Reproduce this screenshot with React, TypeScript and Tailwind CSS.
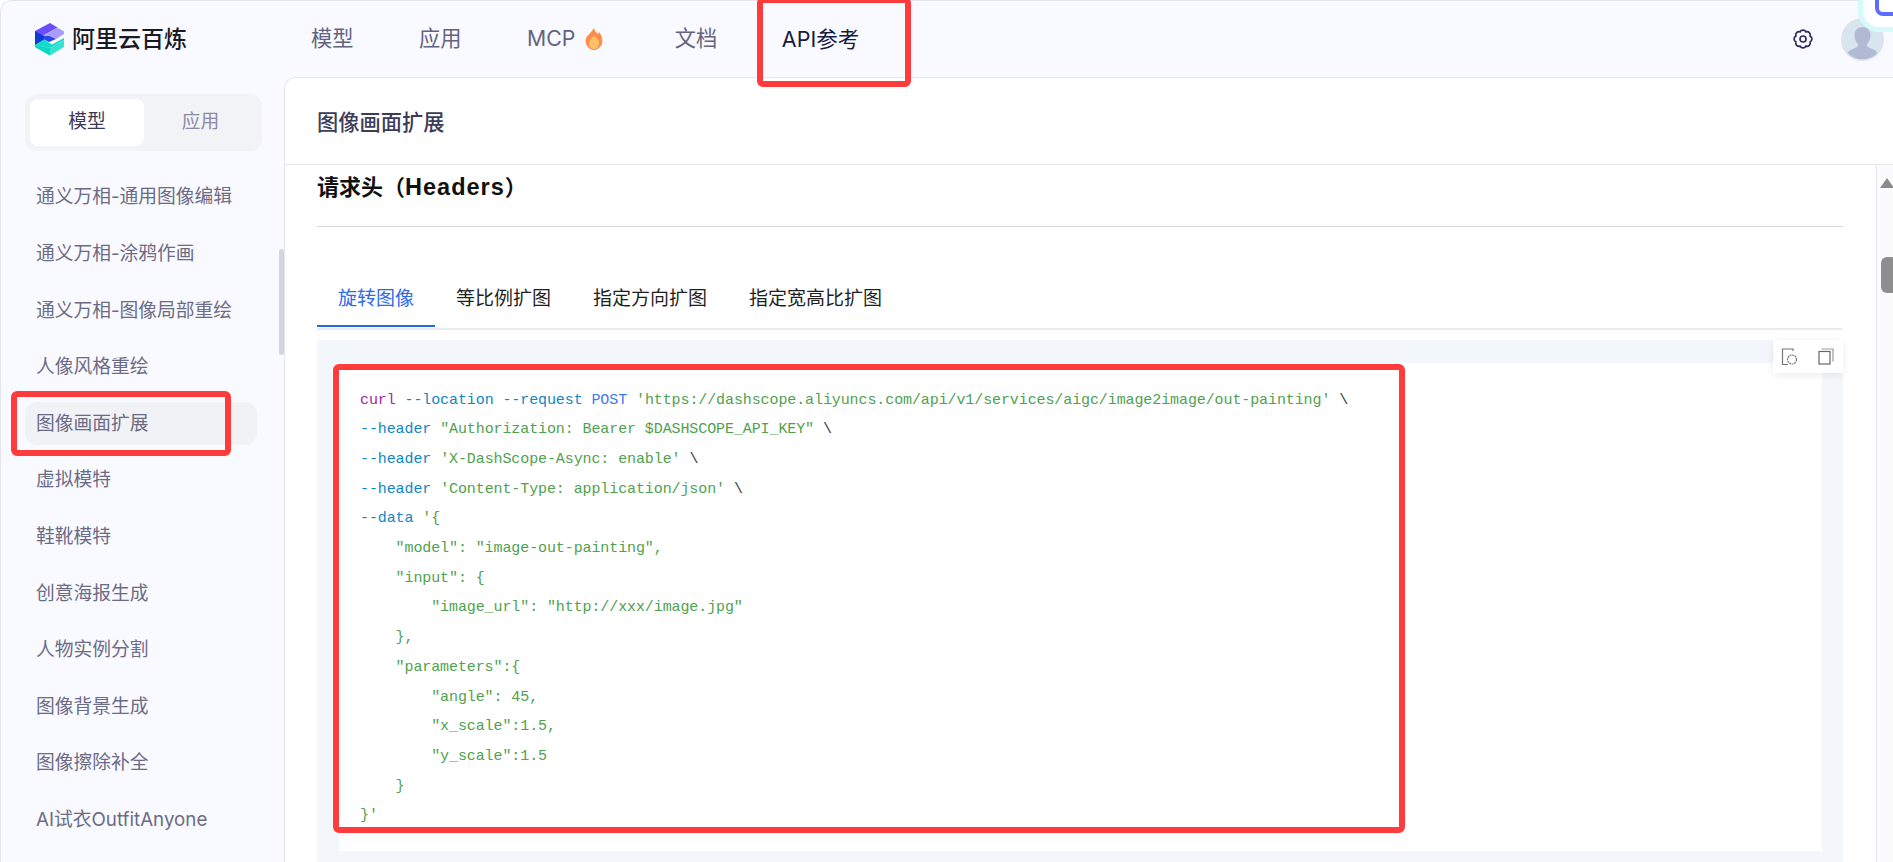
import React from "react";

const items = ["通义万相-通用图像编辑","通义万相-涂鸦作画","通义万相-图像局部重绘","人像风格重绘","图像画面扩展","虚拟模特","鞋靴模特","创意海报生成","人物实例分割","图像背景生成","图像擦除补全","AI试衣OutfitAnyone"];

function Logo() {
  return (
    <svg width="30" height="33" viewBox="5 5 30 33" className="shrink-0">
      <polygon points="20,5 5,13 12.5,18 27.5,9.5" fill="#6B4DFB" />
      <polygon points="27.5,9.5 34,13.5 34,16 26,21 19,17 12.5,18 20,14" fill="#A99CFF" />
      <polygon points="5,13 12.5,18 19,17.5 26,21 19,24 14,21.5 5,27" fill="#2A47E8" />
      <polygon points="5,13 14,18 14,21.5 5,27" fill="#0F3AD6" />
      <polygon points="5,27 14,21.5 22,26.5 34,20 34,22 20,30" fill="#12DCCB" />
      <polygon points="5,27 20,30 34,22 34,29 20,37.5 5,29" fill="#35E3D0" />
      <polygon points="5,27 20,30 20,37.5 5,29" fill="#0DD6C6" />
    </svg>
  );
}

function Flame() {
  return (
    <svg width="18" height="24" viewBox="0 0 18 24" className="shrink-0">
      <path d="M9 1c.6 3 2.2 4 4 6 .5-.6.8-1.2 1-2 2 2.5 3.4 5.4 3.4 8.6C17.400 19 13.600 23 9 23S.6 19 .6 13.600C.6 9 5.600 6.500 9 1z" fill="#FF8B4D" />
      <path d="M9 9c3 1.600 5 4 5 7.200C14 19.600 11.800 22 9 22s-5-2.400-5-5.800C4 13 6.500 11.500 9 9z" fill="#FFC069" />
    </svg>
  );
}

function Gear() {
  return (
    <svg width="22" height="22" viewBox="0 0 24 24" fill="none" stroke="#2B2B5A" strokeWidth="1.800">
      <path d="M19.76 8.79A3.6 3.6 0 0 1 19.76 15.21A3.6 3.6 0 0 1 15.21 19.76A3.6 3.6 0 0 1 8.79 19.76A3.6 3.6 0 0 1 4.24 15.21A3.6 3.6 0 0 1 4.24 8.79A3.6 3.6 0 0 1 8.79 4.24A3.6 3.6 0 0 1 15.21 4.24A3.6 3.6 0 0 1 19.76 8.79Z" />
      <circle cx="12" cy="12" r="3.300" />
    </svg>
  );
}

function Avatar() {
  return (
    <svg width="43" height="43" viewBox="0 0 43 43" className="rounded-full bg-[#D8E4EE] shrink-0">
      <path d="M21.500 9c5 0 8 3.600 8 8.500 0 3.800-1.800 7-3.800 9 .2 2 1.500 3 4.300 4 3 1.100 5 2.300 6.500 4.500a21 21 0 0 1-30 0c1.500-2.200 3.500-3.400 6.500-4.500 2.800-1 4.100-2 4.300-4-2-2-3.800-5.200-3.800-9C13.500 12.600 16.500 9 21.500 9z" fill="#B1B9D3" />
    </svg>
  );
}

function DocGear() {
  return (
    <svg width="18" height="18" viewBox="0 0 18 18" fill="none" stroke="#777" strokeWidth="1.200">
      <path d="M8 1H1.500v15.500H7M8 1h4v2" />
      <circle cx="11" cy="11.500" r="4.500" strokeDasharray="2 .6" />
    </svg>
  );
}

function Copy() {
  return (
    <svg width="16" height="17" viewBox="0 0 16 17" fill="none" stroke="#666" strokeWidth="1.200">
      <rect x="1" y="3.500" width="11" height="12.500" />
      <path d="M3.500 1H15v12.500" stroke="#999" />
    </svg>
  );
}

const P = "text-[#A626A4]";
const B = "text-[#0E86C4]";
const K = "text-[#4078F2]";
const G = "text-[#50A14F]";
const D = "text-[#383A42]";

const jsonLines = [
  `    "model": "image-out-painting",`,
  `    "input": {`,
  `        "image_url": "http://xxx/image.jpg"`,
  `    },`,
  `    "parameters":{`,
  `        "angle": 45,`,
  `        "x_scale":1.5,`,
  `        "y_scale":1.5`,
  `    }`,
  `}'`,
];

function Code() {
  return (
    <pre className="font-['Liberation_Mono',monospace] text-[15px] leading-[29.7px] tracking-[-0.1px] m-0">
      <div><span className={P}>curl</span> <span className={B}>--location</span> <span className={B}>--request</span> <span className={K}>POST</span> <span className={G}>'https://dashscope.aliyuncs.com/api/v1/services/aigc/image2image/out-painting'</span> <span className={D}>\</span></div>
      <div><span className={B}>--header</span> <span className={G}>"Authorization: Bearer $DASHSCOPE_API_KEY"</span> <span className={D}>\</span></div>
      <div><span className={B}>--header</span> <span className={G}>'X-DashScope-Async: enable'</span> <span className={D}>\</span></div>
      <div><span className={B}>--header</span> <span className={G}>'Content-Type: application/json'</span> <span className={D}>\</span></div>
      <div><span className={B}>--data</span> <span className={G}>{"'{"}</span></div>
      {jsonLines.map((l) => (
        <div key={l} className={G}>{l}</div>
      ))}
    </pre>
  );
}

const tabs = ["旋转图像", "等比例扩图", "指定方向扩图", "指定宽高比扩图"];

export default function App() {
  return (
    <div className="relative h-[862px] w-[1893px] overflow-hidden bg-white font-['Inter','Noto_Sans_CJK_SC',sans-serif]">
      <div className="flex h-full flex-col rounded-tl-xl border-t border-l border-[#E6E6EA] bg-[#F9FAFF]">
        <header className="flex h-[76px] shrink-0 items-center pl-[34px] pr-[9px]">
          <div className="flex w-[276px] shrink-0 items-center gap-[7px]">
            <Logo />
            <span className="text-[23px] font-medium text-[#1A1A24]">阿里云百炼</span>
          </div>
          <nav className="flex items-center gap-[65.5px] text-[21.25px] text-[#63637F]">
            <span>模型</span>
            <span>应用</span>
            <span className="mr-[6px] flex items-center gap-[10px]">MCP <Flame /></span>
            <span>文档</span>
            <span className="-ml-[1px] text-[21.5px] text-[#1A1A40]">API参考</span>
          </nav>
          <div className="ml-auto flex items-center gap-[27px]">
            <Gear />
            <Avatar />
          </div>
        </header>
        <div className="flex min-h-0 flex-1">
          <aside className="relative w-[283px] shrink-0 overflow-hidden pl-[24px]">
            <div className="mt-[17px] flex h-[57px] w-[237px] rounded-xl bg-[#F2F3F7] p-[5px] text-[18.75px]">
              <span className="flex w-[114px] items-center justify-center rounded-lg bg-white text-[#3A3A55]">模型</span>
              <span className="flex flex-1 items-center justify-center text-[#8A8AA3]">应用</span>
            </div>
            <ul className="mt-[25px] flex flex-col gap-[13.6px]">
              {items.map((t) => (
                <li key={t} className={`flex h-[43px] w-[232px] shrink-0 items-center rounded-xl px-[11px] text-[18.75px] text-[#6B6B85] ${t === "图像画面扩展" ? "bg-[#F1F2F6]" : ""}`}>{t}</li>
              ))}
            </ul>
            <div className="absolute left-[278px] top-[172px] h-[106px] w-[5px] rounded-full bg-[#D3D4DE]" />
          </aside>
          <main className="flex min-w-0 flex-1 flex-col rounded-tl-xl border-t border-l border-[#E6E6EC] bg-white">
            <div className="flex h-[87px] shrink-0 items-center border-b border-[#E6E6EC] pl-[32px] pt-[3px] text-[21.25px] font-medium text-[#3C3C5A]">图像画面扩展</div>
            <div className="flex min-h-0 flex-1">
              <div className="min-w-0 flex-1 overflow-hidden pl-[32px] pr-[33px]">
                <h2 className="h-[62px] border-b border-[#D9D9DE] pt-[7px] text-[22px] font-bold leading-[30px] text-[#111] font-['Liberation_Sans','Noto_Sans_CJK_SC',sans-serif]">请求头（<span className="text-[23.5px] tracking-[1px]">Headers</span>）</h2>
                <div className="mt-[41px] flex h-[62px] border-b-2 border-[#EBEBEF] text-[19px] text-[#1F1F1F]">
                  {tabs.map((t, i) => (
                    <div key={t} className="relative flex items-center px-[21px] pt-[2px]">
                      <span className={i === 0 ? "text-[#2B6BEA]" : ""}>{t}</span>
                      {i === 0 && <div className="absolute inset-x-0 bottom-[1px] h-[2px] bg-[#1E6BEB]" />}
                    </div>
                  ))}
                </div>
                <div className="relative mt-[10px] h-[522px] bg-[#F3F6FA] pl-[22px] pr-[21px] pt-[23px]">
                  <div className="h-[488px] bg-white pl-[21px] pt-[22.500px]">
                    <Code />
                  </div>
                  <div className="absolute right-0 top-0 flex h-[33px] w-[70px] items-center justify-between bg-white pl-[8px] pr-[9px] shadow-[0_2px_8px_rgba(0,0,0,0.08)]">
                    <DocGear />
                    <Copy />
                  </div>
                </div>
              </div>
              <div className="relative w-[17px] shrink-0 border-l border-[#E6E6EC] bg-[#FBFBFB]">
                <div className="absolute left-[3px] top-[13px] h-0 w-0 border-x-[7px] border-b-[10px] border-x-transparent border-b-[#8B8B8B]" />
                <div className="absolute left-[4px] top-[92px] h-[36px] w-[16px] rounded-md bg-[#8E8E8E]" />
              </div>
            </div>
          </main>
        </div>
      </div>

      <div className="absolute left-[757px] top-[-3px] h-[90px] w-[154px] rounded-md border-[6px] border-[#FF3B3B]" />
      <div className="absolute left-[11px] top-[391px] h-[65px] w-[220px] rounded-md border-[6px] border-[#FF3B3B]" />
      <div className="absolute left-[333px] top-[364px] h-[469px] w-[1072px] rounded-md border-[6px] border-[#FF3B3B]" />
      <div className="absolute left-[1863px] top-[-30px] h-[57px] w-[60px] rounded-2xl bg-white shadow-[0_0_0_5px_#D6F9FA]">
        <div className="absolute left-[12px] top-[0px] h-[46px] w-[40px] rounded-lg border-4 border-[#5B6EFF] bg-white" />
      </div>
    </div>
  );
}
